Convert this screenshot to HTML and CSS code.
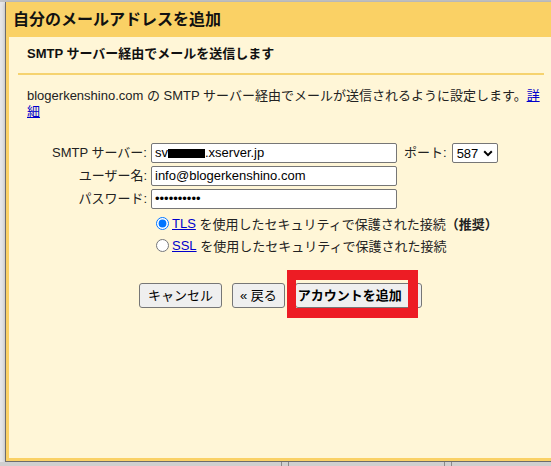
FILE: index.html
```html
<!DOCTYPE html>
<html lang="ja">
<head>
<meta charset="utf-8">
<title>自分のメールアドレスを追加</title>
<link rel="stylesheet" href="styles.css">
</head>
<body>
<div class="desk-top"></div>
<div class="window">
  <div class="header"><h1 class="title">自分のメールアドレスを追加</h1></div>
  <div class="panel">
    <div class="section">
      <h2 class="subtitle">SMTP サーバー経由でメールを送信します</h2>
      <div class="rule"></div>
      <p class="intro">blogerkenshino.com の SMTP サーバー経由でメールが送信されるように設定します。<a href="#" class="link">詳細</a></p>
      <div class="form">
        <span class="lbl">SMTP サーバー:</span>
        <div class="field">sv<span class="redact"></span>.xserver.jp</div>
        <div class="port"><span class="lbl">ポート:</span><div class="select">587<svg class="chev" width="10" height="7" viewBox="0 0 10 7"><path d="M1.2 1.3 L5 5.1 L8.8 1.3" fill="none" stroke="#000" stroke-width="2"/></svg></div></div>
        <span class="lbl">ユーザー名:</span>
        <div class="field">info@blogerkenshino.com</div>
        <span></span>
        <span class="lbl">パスワード:</span>
        <div class="field">••••••••••</div>
        <span></span>
      </div>
      <div class="options">
        <label class="opt"><input type="radio" name="sec" checked><a href="#" class="link">TLS</a>&nbsp;を使用したセキュリティで保護された接続<b>（推奨）</b></label>
        <label class="opt"><input type="radio" name="sec"><a href="#" class="link">SSL</a>&nbsp;を使用したセキュリティで保護された接続</label>
      </div>
      <div class="actions">
        <button class="btn">キャンセル</button>
        <button class="btn btn-back">« 戻る</button>
        <span class="primary-wrap">
          <button class="btn btn-primary">アカウントを追加</button>
          <span class="highlight"></span>
        </span>
      </div>
    </div>
  </div>
</div>
<div class="desk-bottom">
  <span class="gap g1"></span><span class="vline"></span><span class="gap g2"></span><span class="vline"></span><span class="gap g3"></span><span class="vline"></span><span class="gap g2"></span><span class="vline"></span>
</div>
</body>
</html>
```
FILE: styles.css
```css
html, body {
  margin: 0;
  padding: 0;
}
body {
  width: 551px;
  height: 466px;
  overflow: hidden;
  background: #e7e7e7;
  font-family: "Liberation Sans", "Noto Sans CJK JP", sans-serif;
  font-size: 13px;
  color: #222;
}
.desk-top {
  height: 2px;
  background: #c4c4c4;
}
.window {
  margin-left: 5px;
  width: 560px;
  border-left: 1px solid #6c6c6c;
  border-bottom: 1px solid #6c6c6c;
  background: #fad165;
  box-shadow: 0 1px 4px rgba(0, 0, 0, 0.25);
}
.header {
  height: 35px;
  display: flex;
  align-items: center;
  padding-left: 7px;
}
.title {
  margin: 0;
  font-size: 16px;
  font-weight: bold;
  color: #111;
  line-height: 20px;
}
.panel {
  margin: 0 0 3px 3px;
  height: 421px;
  background: #fff6d7;
}
.section {
  margin-left: 9px;
  width: 526px;
  padding-top: 9px;
}
.subtitle {
  margin: 0;
  padding-left: 9px;
  font-size: 13px;
  font-weight: bold;
  line-height: 16px;
  color: #111;
}
.rule {
  margin-top: 11px;
  height: 2px;
  background: #f6d36f;
}
.intro {
  margin: 13px 0 0;
  padding-left: 9px;
  line-height: 16px;
}
.link {
  color: #0000cc;
  text-decoration: underline;
}
.form {
  margin-top: 23px;
  padding-left: 9px;
  display: grid;
  grid-template-columns: 120px 246px auto;
  grid-auto-rows: 20px;
  column-gap: 4px;
  row-gap: 3px;
  align-items: center;
}
.lbl {
  text-align: right;
  line-height: 16px;
}
.field {
  box-sizing: border-box;
  height: 20px;
  border: 1px solid #767676;
  border-radius: 2px;
  background: #fff;
  padding: 0 3px;
  line-height: 18px;
  color: #000;
  white-space: nowrap;
}
.redact {
  display: inline-block;
  width: 37px;
  height: 9px;
  background: #000;
  vertical-align: -1px;
}
.port {
  margin-left: 3px;
  display: flex;
  align-items: center;
  gap: 5px;
}
.select {
  box-sizing: border-box;
  width: 46px;
  height: 20px;
  border: 1px solid #767676;
  border-radius: 2px;
  background: #fff;
  padding-left: 4px;
  display: flex;
  align-items: center;
  color: #000;
}
.chev {
  margin-left: 5px;
}
.options {
  margin-top: 3px;
  padding-left: 133px;
}
.opt {
  height: 22px;
  display: flex;
  align-items: center;
  white-space: nowrap;
}
.opt input {
  width: 13px;
  height: 13px;
  margin: 0 3px 0 5px;
}
.opt b {
  font-weight: bold;
}
.actions {
  margin-top: 27px;
  padding-left: 121px;
  display: flex;
  gap: 10px;
}
.btn {
  box-sizing: border-box;
  height: 25px;
  padding: 0 8px;
  border: 1px solid #767676;
  border-radius: 3px;
  background: #efefef;
  color: #000;
  font-family: "Liberation Sans", "Noto Sans CJK JP", sans-serif;
  font-size: 13px;
  line-height: 23px;
}
.btn-back {
  padding: 0 7px;
}
.primary-wrap {
  position: relative;
  display: inline-flex;
}
.btn-primary {
  font-weight: bold;
  padding: 0 19px 0 2px;
}
.highlight {
  position: absolute;
  left: -8px;
  top: -13px;
  width: 131px;
  height: 48px;
  box-sizing: border-box;
  border-style: solid;
  border-color: #ed1c24;
  border-width: 10px 10px 10px 9px;
}
.desk-bottom {
  height: 4px;
  display: flex;
  background: #cfcfcf;
}
.gap { display: block; }
.g1 { width: 281px; }
.g2 { width: 6px; }
.g3 { width: 155px; }
.vline {
  width: 1px;
  background: #8a8a8a;
}
```
